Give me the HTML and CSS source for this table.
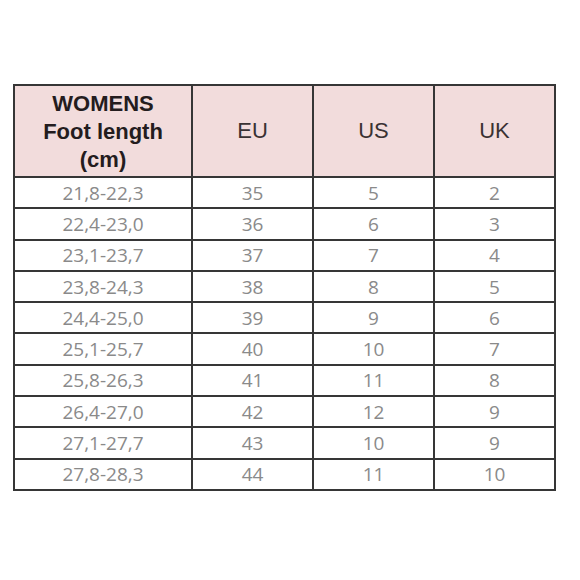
FILE: index.html
```html
<!DOCTYPE html>
<html>
<head>
<meta charset="utf-8">
<link rel="stylesheet" href="styles.css">
</head>
<body>
<div class="chart">
  <div class="head first">WOMENS<br>Foot length<br>(cm)</div>
  <div class="head">EU</div>
  <div class="head">US</div>
  <div class="head">UK</div>

  <div class="cell">21,8-22,3</div><div class="cell">35</div><div class="cell">5</div><div class="cell">2</div>
  <div class="cell">22,4-23,0</div><div class="cell">36</div><div class="cell">6</div><div class="cell">3</div>
  <div class="cell">23,1-23,7</div><div class="cell">37</div><div class="cell">7</div><div class="cell">4</div>
  <div class="cell">23,8-24,3</div><div class="cell">38</div><div class="cell">8</div><div class="cell">5</div>
  <div class="cell">24,4-25,0</div><div class="cell">39</div><div class="cell">9</div><div class="cell">6</div>
  <div class="cell">25,1-25,7</div><div class="cell">40</div><div class="cell">10</div><div class="cell">7</div>
  <div class="cell">25,8-26,3</div><div class="cell">41</div><div class="cell">11</div><div class="cell">8</div>
  <div class="cell">26,4-27,0</div><div class="cell">42</div><div class="cell">12</div><div class="cell">9</div>
  <div class="cell">27,1-27,7</div><div class="cell">43</div><div class="cell">10</div><div class="cell">9</div>
  <div class="cell">27,8-28,3</div><div class="cell">44</div><div class="cell">11</div><div class="cell">10</div>
</div>
</body>
</html>
```

FILE: styles.css
```css
html, body {
  margin: 0;
  padding: 0;
  background: #ffffff;
}

body {
  padding: 84px 0 0 13px;
}

.chart {
  display: grid;
  grid-template-columns: 176px 119px 119px 119px;
  grid-template-rows: 90px repeat(10, 29.3px);
  gap: 2px;
  padding: 2px;
  width: max-content;
  background: #363636;
}

.head {
  background: #f2dcdc;
  display: flex;
  align-items: center;
  justify-content: center;
  text-align: center;
  font-family: "Liberation Sans", Arial, sans-serif;
  font-size: 22px;
  color: #3a3233;
}

.head.first {
  font-weight: bold;
  line-height: 28px;
  color: #241c1e;
  padding-top: 2px;
}

.cell {
  background: #ffffff;
  display: flex;
  align-items: center;
  justify-content: center;
  font-family: "Open Sans", sans-serif;
  font-size: 19px;
  color: #8a8a8a;
}
```
